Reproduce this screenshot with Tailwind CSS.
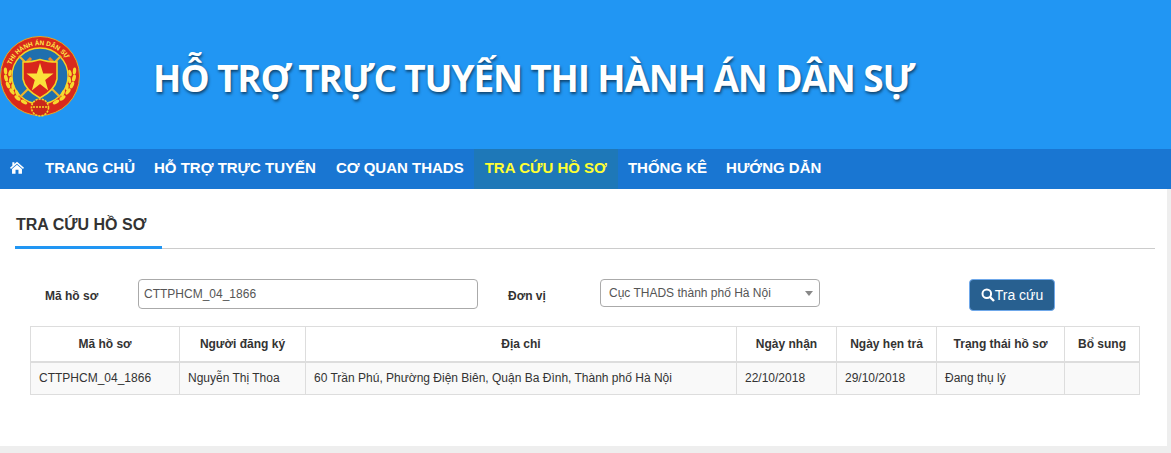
<!DOCTYPE html>
<html lang="vi">
  <head>
    <meta charset="UTF-8" />
    <meta name="viewport" content="width=device-width, initial-scale=1.0" />
    <script src="https://cdn.jsdelivr.net/npm/@tailwindcss/browser@4"></script>
    <title>Tra cứu hồ sơ</title>
  </head>
  <body class="bg-[#eeeeee] font-['Liberation_Sans',Arial,sans-serif] text-[#333333] h-[453px] overflow-hidden">
    <!-- banner -->
    <header class="h-[149px] bg-[#2196f3] flex items-center">
      <svg class="w-[82px] h-[82px] mt-[3px] shrink-0" viewBox="0 0 82 82">
        <defs>
          <path id="ringtext" d="M11 30 A31.5 31.5 0 0 1 66 23.5" fill="none" />
          <g id="wreath" fill="#f7d92e">
            <ellipse cx="5.5" cy="36" rx="1.7" ry="3.6" transform="rotate(-4 5.5 36)" />
            <ellipse cx="10" cy="38" rx="1.6" ry="3.4" transform="rotate(14 10 38)" />
            <ellipse cx="6" cy="43" rx="1.8" ry="3.6" transform="rotate(-14 6 43)" />
            <ellipse cx="10.5" cy="45" rx="1.6" ry="3.4" transform="rotate(8 10.5 45)" />
            <ellipse cx="8" cy="50" rx="1.8" ry="3.6" transform="rotate(-24 8 50)" />
            <ellipse cx="13" cy="52" rx="1.6" ry="3.4" transform="rotate(-6 13 52)" />
            <ellipse cx="12" cy="56.5" rx="1.8" ry="3.6" transform="rotate(-36 12 56.5)" />
            <ellipse cx="17" cy="58" rx="1.6" ry="3.4" transform="rotate(-20 17 58)" />
            <ellipse cx="17.5" cy="63" rx="1.8" ry="3.6" transform="rotate(-50 17.5 63)" />
            <ellipse cx="24" cy="67" rx="1.7" ry="3.6" transform="rotate(-60 24 67)" />
          </g>
          <g id="sword">
            <path d="M19 21 L60 62" stroke="#f0b429" stroke-width="2.2" />
            <path d="M24 30 L31 23" stroke="#e98a2b" stroke-width="3" />
          </g>
        </defs>
        <circle cx="40" cy="41" r="39.5" fill="#d9291c" stroke="#e8a820" stroke-width="1" />
        <circle cx="40" cy="41" r="28" fill="#1f6fae" stroke="#f5d327" stroke-width="1.4" />
        <text font-family="Liberation Sans" font-weight="700" font-size="6.6" fill="#ffe94a"><textPath href="#ringtext" textLength="68" lengthAdjust="spacingAndGlyphs">THI HÀNH ÁN DÂN SỰ</textPath></text>
        <use href="#sword" />
        <use href="#sword" transform="matrix(-1 0 0 1 80 0)" />
        <path d="M23 27 Q33 27 40 24.5 Q47 27 57 27 L57 44 Q55 55 40 63 Q25 55 23 44 Z" fill="#d8261c" stroke="#f5d327" stroke-width="1.5" />
        <path d="M40 28 L43.2 38.5 L53.5 38.5 L45.2 45 L48.2 55.5 L40 49 L31.8 55.5 L34.8 45 L26.5 38.5 L36.8 38.5 Z" fill="#fbe23a" />
        <use href="#wreath" />
        <use href="#wreath" transform="matrix(-1 0 0 1 80 0)" />
        <circle cx="40" cy="72.5" r="8.5" fill="#c9281b" stroke="#f5d327" stroke-width="1.6" stroke-dasharray="2.2 1" />
        <path d="M33 72 H47" stroke="#f5d327" stroke-width="1.6" stroke-dasharray="2 1" />
      </svg>
      <h1 class="ml-[71px] mt-[6px] text-[37px] leading-none font-bold text-white font-['Open_Sans',sans-serif] tracking-[-1.15px] whitespace-nowrap [text-shadow:1px_2px_3px_rgba(0,0,0,0.55)]">
        HỖ TRỢ TRỰC TUYẾN THI HÀNH ÁN DÂN SỰ
      </h1>
    </header>

    <!-- menu -->
    <nav class="h-10 bg-[#1976d2] flex items-stretch text-[15px] font-bold text-white pl-[10px]">
      <a class="flex items-center pr-[11px] pb-[3px]" href="#">
        <svg class="w-[14px] h-[13px]" viewBox="0 0 24 22" fill="#ffffff">
          <path d="M12 1 L24 11.5 L22.3 13.4 L12 4.4 L1.7 13.4 L0 11.5 L4 8 V2 H7.5 V4.9 Z" />
          <path d="M12 6.2 L20.5 13.6 V21.5 H14.5 V15 H9.5 V21.5 H3.5 V13.6 Z" />
        </svg>
      </a>
      <a class="flex items-center pl-[10px] pr-[9px] pb-[2px]" href="#">TRANG CHỦ</a>
      <a class="flex items-center px-[10px] pb-[2px]" href="#">HỖ TRỢ TRỰC TUYẾN</a>
      <a class="flex items-center px-[10px] pb-[2px]" href="#">CƠ QUAN THADS</a>
      <a class="flex items-center px-[11px] pb-[2px] bg-[#1e78b8] text-[#ffff33]" href="#">TRA CỨU HỒ SƠ</a>
      <a class="flex items-center pl-[10px] pr-[9px] pb-[2px]" href="#">THỐNG KÊ</a>
      <a class="flex items-center px-[10px] pb-[2px]" href="#">HƯỚNG DẪN</a>
    </nav>

    <main class="bg-white w-[1167px] h-[257px] pt-[16px]">
      <div class="ml-[15px] w-[1140px] border-b border-[#cccccc] h-[44px]">
        <h2 class="inline-block h-[44px] w-[147px] border-b-[3px] border-[#2196f3] pl-px pt-[10px] text-[16px] leading-[20px] font-bold text-[#333333] whitespace-nowrap">
          TRA CỨU HỒ SƠ
        </h2>
      </div>

      <form class="flex items-start mt-[30px] pl-[45px] text-[12px]">
        <label class="w-[93px] mt-[9px] font-bold leading-[17px]">Mã hồ sơ</label>
        <input
          class="w-[340px] h-[30px] px-[5px] pb-[1px] border border-[#aaaaaa] rounded-[4px] text-[12px] text-[#555555]"
          value="CTTPHCM_04_1866"
        />
        <label class="w-[92px] ml-[30px] mt-[9px] font-bold leading-[17px]">Đơn vị</label>
        <div class="w-[220px] h-[28px] border border-[#aaaaaa] rounded-[4px] flex items-center justify-between pl-2 pr-[6px] text-[#555555]">
          <span>Cục THADS thành phố Hà Nội</span>
          <span class="border-x-4 border-t-[5px] border-x-transparent border-t-[#888888]"></span>
        </div>
        <button
          type="button"
          class="ml-[149px] w-[86px] h-[32px] bg-[#286090] border border-[#6fa8ea] rounded-[4px] text-white text-[14px] flex items-center justify-center"
        >
          <svg class="w-[14px] h-[14px]" viewBox="0 0 14 14" fill="none" stroke="#ffffff">
            <circle cx="5.8" cy="5.8" r="4.3" stroke-width="2" />
            <path d="M9 9 L13 13" stroke-width="2.4" />
          </svg>
          Tra cứu
        </button>
      </form>

      <table class="ml-[30px] mt-[15px] w-[1109px] table-fixed border-collapse text-[12px]">
        <thead>
          <tr class="h-[35px] font-bold">
            <th class="w-[149px] border border-[#dddddd] border-b-2 text-center">Mã hồ sơ</th>
            <th class="w-[126px] border border-[#dddddd] border-b-2 text-center">Người đăng ký</th>
            <th class="w-[431px] border border-[#dddddd] border-b-2 text-center">Địa chỉ</th>
            <th class="w-[100px] border border-[#dddddd] border-b-2 text-center">Ngày nhận</th>
            <th class="w-[100px] border border-[#dddddd] border-b-2 text-center">Ngày hẹn trả</th>
            <th class="w-[128px] border border-[#dddddd] border-b-2 text-center">Trạng thái hồ sơ</th>
            <th class="w-[75px] border border-[#dddddd] border-b-2 text-center">Bổ sung</th>
          </tr>
        </thead>
        <tbody>
          <tr class="h-[33px] bg-[#f9f9f9]">
            <td class="border border-[#dddddd] px-2">CTTPHCM_04_1866</td>
            <td class="border border-[#dddddd] px-2">Nguyễn Thị Thoa</td>
            <td class="border border-[#dddddd] px-2">60 Trần Phú, Phường Điện Biên, Quận Ba Đình, Thành phố Hà Nội</td>
            <td class="border border-[#dddddd] px-2">22/10/2018</td>
            <td class="border border-[#dddddd] px-2">29/10/2018</td>
            <td class="border border-[#dddddd] px-2">Đang thụ lý</td>
            <td class="border border-[#dddddd] px-2"></td>
          </tr>
        </tbody>
      </table>
    </main>
  </body>
</html>
